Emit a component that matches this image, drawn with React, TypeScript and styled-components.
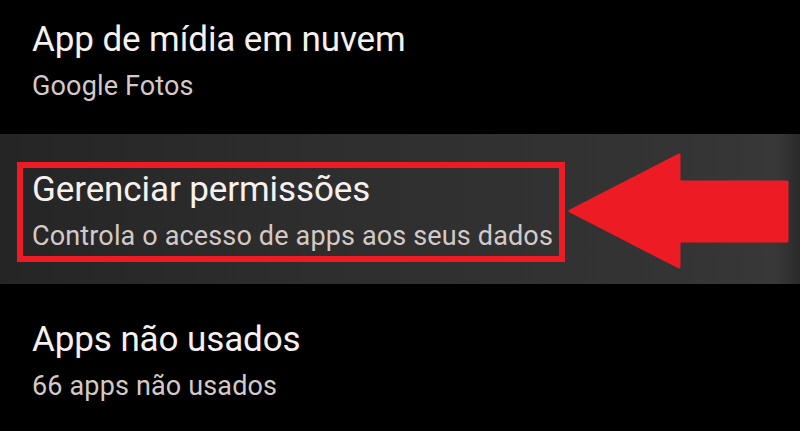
import React from "react";
import styled, { createGlobalStyle } from "styled-components";

const Global = createGlobalStyle`
  html, body { margin: 0; padding: 0; background: #000; overflow: hidden; }
  body { width: 800px; height: 431px; }
`;

const Screen = styled.div`
  position: relative;
  width: 800px;
  height: 431px;
  overflow: hidden;
  background: #000;
  font-family: Roboto, "Noto Sans", "Liberation Sans", sans-serif;
`;

const List = styled.div`
  display: flex;
  flex-direction: column;
  margin-top: -16px;
`;

const Row = styled.div<{ $active?: boolean }>`
  position: relative;
  height: 150px;
  box-sizing: border-box;
  padding: 36px 0 0 32px;
  display: flex;
  flex-direction: column;
  background: ${(p) =>
    p.$active
      ? "linear-gradient(90deg, #252525 0%, #2e2e2e 40%, #343434 85%, #383838 97%, #2a2a2a 100%)"
      : "#000"};
`;

const Title = styled.div`
  font-size: 35px;
  line-height: 40px;
  color: #f6f1ef;
  letter-spacing: -0.1px;
`;

const Subtitle = styled.div`
  margin-top: 10px;
  font-size: 27px;
  line-height: 32px;
  color: #d3cac7;
  letter-spacing: 0.15px;
`;

const Highlight = styled.div`
  position: absolute;
  left: 17px;
  top: 28px;
  width: 548px;
  height: 100px;
  box-sizing: border-box;
  border: 6px solid #ed1c24;
  pointer-events: none;
`;

const Arrow = styled.svg`
  position: absolute;
  left: 0;
  top: 0;
  pointer-events: none;
`;

export default function App() {
  return (
    <Screen>
      <Global />
      <List>
        <Row>
          <Title>App de mídia em nuvem</Title>
          <Subtitle>Google Fotos</Subtitle>
        </Row>
        <Row $active>
          <Title>Gerenciar permissões</Title>
          <Subtitle>Controla o acesso de apps aos seus dados</Subtitle>
          <Highlight />
        </Row>
        <Row>
          <Title>Apps não usados</Title>
          <Subtitle>66 apps não usados</Subtitle>
        </Row>
      </List>
      <Arrow width="800" height="431" viewBox="0 0 800 431">
        <polygon
          points="570,211 679,155 679,182 787,182 787,241 679,241 679,267"
          fill="#ed1c24"
          stroke="#ed1c24"
          strokeWidth="3"
          strokeLinejoin="round"
        />
      </Arrow>
    </Screen>
  );
}
